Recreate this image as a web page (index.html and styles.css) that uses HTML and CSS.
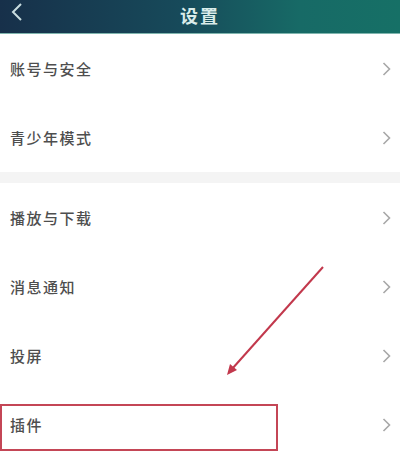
FILE: index.html
```html
<!DOCTYPE html>
<html lang="zh">
<head>
<meta charset="utf-8">
<title>设置</title>
<link rel="stylesheet" href="styles.css">
</head>
<body>
<div class="page">
  <header class="topbar">
    <span class="back">
      <svg width="12" height="18" viewBox="0 0 12 18"><path d="M10 1 L2 9 L10 17" fill="none" stroke="#c9dde0" stroke-width="2"/></svg>
    </span>
    <h1 class="title">设置</h1>
    <span class="spacer"></span>
  </header>
  <ul class="group">
    <li class="row"><span class="label">账号与安全</span><svg class="chev" width="9" height="14" viewBox="0 0 9 14"><path d="M1.5 1 L7.5 7 L1.5 13" fill="none" stroke="#a8a8a8" stroke-width="1.6"/></svg></li>
    <li class="row"><span class="label">青少年模式</span><svg class="chev" width="9" height="14" viewBox="0 0 9 14"><path d="M1.5 1 L7.5 7 L1.5 13" fill="none" stroke="#a8a8a8" stroke-width="1.6"/></svg></li>
  </ul>
  <div class="divider"></div>
  <ul class="group">
    <li class="row"><span class="label">播放与下载</span><svg class="chev" width="9" height="14" viewBox="0 0 9 14"><path d="M1.5 1 L7.5 7 L1.5 13" fill="none" stroke="#a8a8a8" stroke-width="1.6"/></svg></li>
    <li class="row"><span class="label">消息通知</span><svg class="chev" width="9" height="14" viewBox="0 0 9 14"><path d="M1.5 1 L7.5 7 L1.5 13" fill="none" stroke="#a8a8a8" stroke-width="1.6"/></svg></li>
    <li class="row"><span class="label">投屏</span><svg class="chev" width="9" height="14" viewBox="0 0 9 14"><path d="M1.5 1 L7.5 7 L1.5 13" fill="none" stroke="#a8a8a8" stroke-width="1.6"/></svg></li>
    <li class="row"><span class="label">插件</span><svg class="chev" width="9" height="14" viewBox="0 0 9 14"><path d="M1.5 1 L7.5 7 L1.5 13" fill="none" stroke="#a8a8a8" stroke-width="1.6"/></svg></li>
  </ul>
  <div class="highlight"></div>
  <svg class="arrow" width="400" height="463" viewBox="0 0 400 463">
    <line x1="323" y1="267" x2="232" y2="369" stroke="#c2384c" stroke-width="2"/>
    <path d="M227 375 L230 364 L237 370 Z" fill="#c2384c"/>
  </svg>
</div>
</body>
</html>
```
FILE: styles.css
```css
* { box-sizing: border-box; }
html, body { margin: 0; padding: 0; background: #ffffff; }
body {
  font-family: "Noto Sans CJK SC", "Noto Sans", sans-serif;
  width: 400px;
  height: 463px;
  overflow: hidden;
}
.page { position: relative; width: 400px; height: 463px; }
.topbar {
  height: 34px;
  display: grid;
  grid-template-columns: 40px 1fr 40px;
  align-items: center;
  background: linear-gradient(90deg, #17304a 0%, #174a5a 45%, #176a66 75%, #167066 100%);
  border-bottom: 1px solid #7fb5ae;
}
.back { display: flex; align-items: flex-start; padding-left: 11px; height: 100%; padding-top: 3px; }
.title {
  margin: 0;
  text-align: center;
  font-size: 18px;
  font-weight: 700;
  letter-spacing: 2px;
  color: #d9ecea;
  line-height: 30px;
  align-self: start;
}
.group { list-style: none; margin: 0; padding: 0; }
.row {
  height: 69px;
  display: flex;
  align-items: center;
  justify-content: space-between;
  padding: 0 9px 0 10px;
}
.label {
  font-size: 15px;
  letter-spacing: 1.5px;
  color: #4e4e4e;
  font-weight: 500;
}
.chev { flex: none; }
.divider { height: 11px; background: #f4f4f4; }
.highlight {
  position: absolute;
  left: 0;
  top: 404px;
  width: 278px;
  height: 47px;
  border: 2px solid #c44656;
}
.arrow { position: absolute; left: 0; top: 0; pointer-events: none; }
```
